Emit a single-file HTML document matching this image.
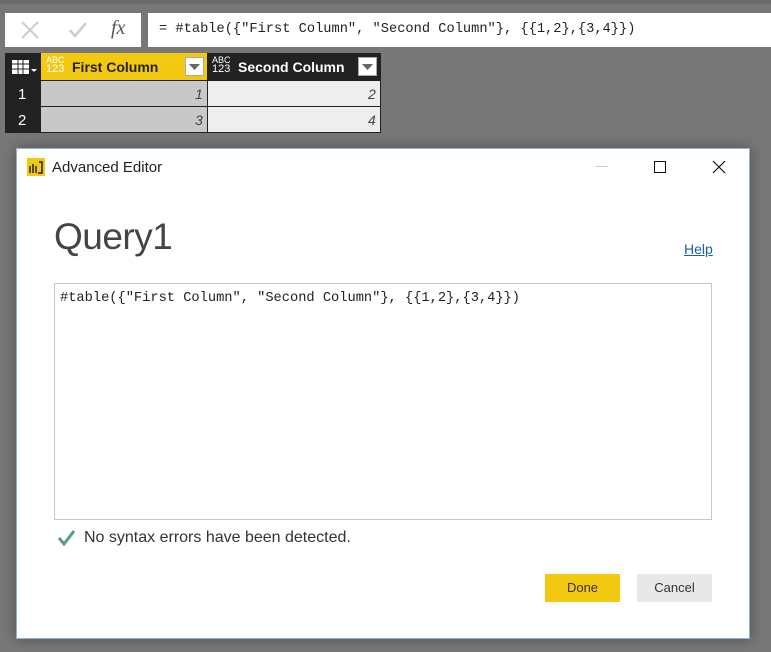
<!DOCTYPE html>
<html><head><meta charset="utf-8"><style>
*{box-sizing:border-box;margin:0;padding:0}
body{width:771px;height:652px;background:#777;position:relative;overflow:hidden;font-family:"Liberation Sans",sans-serif}
.a{position:absolute}
.mono{font-family:"Liberation Mono",monospace;font-size:13.7px;color:#222}
</style></head><body>
<div class="a" style="left:0;top:0;width:771px;height:4px;background:#6a6a6a"></div>
<div class="a" style="left:5px;top:13px;width:136px;height:34px;background:#fff"></div>
<svg class="a" style="left:20px;top:20px" width="20" height="20"><path d="M2 2L18 18M18 2L2 18" stroke="#ccc" stroke-width="2"/></svg>
<svg class="a" style="left:68px;top:21px" width="20" height="18"><path d="M2 9L7 15L18 2" stroke="#ccc" stroke-width="2.5" fill="none"/></svg>
<div class="a" style="left:111px;top:17px;font-family:'Liberation Serif',serif;font-style:italic;font-size:20px;color:#555">fx</div>
<div class="a" style="left:148px;top:13px;width:623px;height:34px;background:#fff"></div>
<div class="a mono" style="left:159px;top:22px">= #table({"First Column", "Second Column"}, {{1,2},{3,4}})</div>

<div class="a" style="left:5px;top:53px;width:376px;height:80px;background:#222"></div>
<svg class="a" style="left:12px;top:59px" width="26" height="18"><rect x="0" y="1" width="17" height="14" fill="#fff"/><path d="M0 5H17M0 10H17M6 1V15M11 1V15" stroke="#222"/><path d="M19 10L22 13L25 10Z" fill="#fff"/></svg>
<div class="a" style="left:41px;top:53px;width:166px;height:27px;background:#f2c811"></div>
<div class="a" style="left:46px;top:56px;font-size:9px;line-height:9px;color:#fff">ABC<br><span style="font-size:11px">123</span></div>
<div class="a" style="left:72px;top:59px;font-size:14px;font-weight:bold;color:#222">First Column</div>
<div class="a" style="left:185px;top:57px;width:19px;height:19px;background:#fff;border:1px solid #aaa"></div>
<svg class="a" style="left:189px;top:64px" width="11" height="6"><path d="M0 0H11L5.5 6Z" fill="#666"/></svg>
<div class="a" style="left:212px;top:56px;font-size:9px;line-height:9px;color:#fff">ABC<br><span style="font-size:11px">123</span></div>
<div class="a" style="left:238px;top:59px;font-size:14px;font-weight:bold;color:#fff">Second Column</div>
<div class="a" style="left:358px;top:57px;width:19px;height:19px;background:#fff;border:1px solid #aaa"></div>
<svg class="a" style="left:362px;top:64px" width="11" height="6"><path d="M0 0H11L5.5 6Z" fill="#666"/></svg>
<div class="a" style="left:41px;top:81px;width:166px;height:25px;background:#c8c8c8"></div>
<div class="a" style="left:41px;top:107px;width:166px;height:25px;background:#c8c8c8"></div>
<div class="a" style="left:208px;top:81px;width:172px;height:25px;background:#eee"></div>
<div class="a" style="left:208px;top:107px;width:172px;height:25px;background:#eee"></div>
<div class="a" style="left:18px;top:86px;color:#fff;font-size:15px">1</div>
<div class="a" style="left:18px;top:112px;color:#fff;font-size:15px">2</div>
<div class="a" style="left:195px;top:86px;font-style:italic;font-size:14px;color:#444">1</div>
<div class="a" style="left:368px;top:86px;font-style:italic;font-size:14px;color:#444">2</div>
<div class="a" style="left:195px;top:112px;font-style:italic;font-size:14px;color:#444">3</div>
<div class="a" style="left:368px;top:112px;font-style:italic;font-size:14px;color:#444">4</div>

<div class="a" style="left:16px;top:148px;width:734px;height:491px;background:#fff;border:1px solid #8fb0d8;box-shadow:0 0 12px rgba(0,0,0,.35)"></div>
<div class="a" style="left:27px;top:158px;width:18px;height:18px;background:#f2c811"></div>
<svg class="a" style="left:28px;top:160px" width="16" height="14"><path d="M2 6V13M5 4V13M8 6V13M11 2H14V13H10" stroke="#222" stroke-width="1.5" fill="none"/></svg>
<div class="a" style="left:52px;top:159px;font-size:15px;color:#222">Advanced Editor</div>
<div class="a" style="left:596px;top:166px;width:12px;height:1px;background:#ccc"></div>
<div class="a" style="left:654px;top:161px;width:12px;height:12px;border:1px solid #111"></div>
<svg class="a" style="left:712px;top:160px" width="14" height="14"><path d="M1 1L13 13M13 1L1 13" stroke="#111" stroke-width="1.2"/></svg>
<div class="a" style="left:54px;top:216px;font-size:37px;color:#444;letter-spacing:-0.5px">Query1</div>
<div class="a" style="left:684px;top:241px;font-size:14px;color:#1a5fb4;text-decoration:underline">Help</div>
<div class="a" style="left:54px;top:283px;width:658px;height:237px;border:1px solid #c8c8c8"></div>
<div class="a mono" style="left:60px;top:291px">#table({"First Column", "Second Column"}, {{1,2},{3,4}})</div>
<svg class="a" style="left:57px;top:529px" width="20" height="18"><path d="M2 9L7 15L17 2" stroke="#5d9a85" stroke-width="3" fill="none"/></svg>
<div class="a" style="left:84px;top:529px;font-size:16px;color:#333">No syntax errors have been detected.</div>
<div class="a" style="left:545px;top:574px;width:75px;height:28px;background:#f2c811;font-size:13px;color:#333;text-align:center;line-height:28px">Done</div>
<div class="a" style="left:637px;top:574px;width:75px;height:28px;background:#e8e8e8;font-size:13px;color:#333;text-align:center;line-height:28px">Cancel</div>
</body></html>
